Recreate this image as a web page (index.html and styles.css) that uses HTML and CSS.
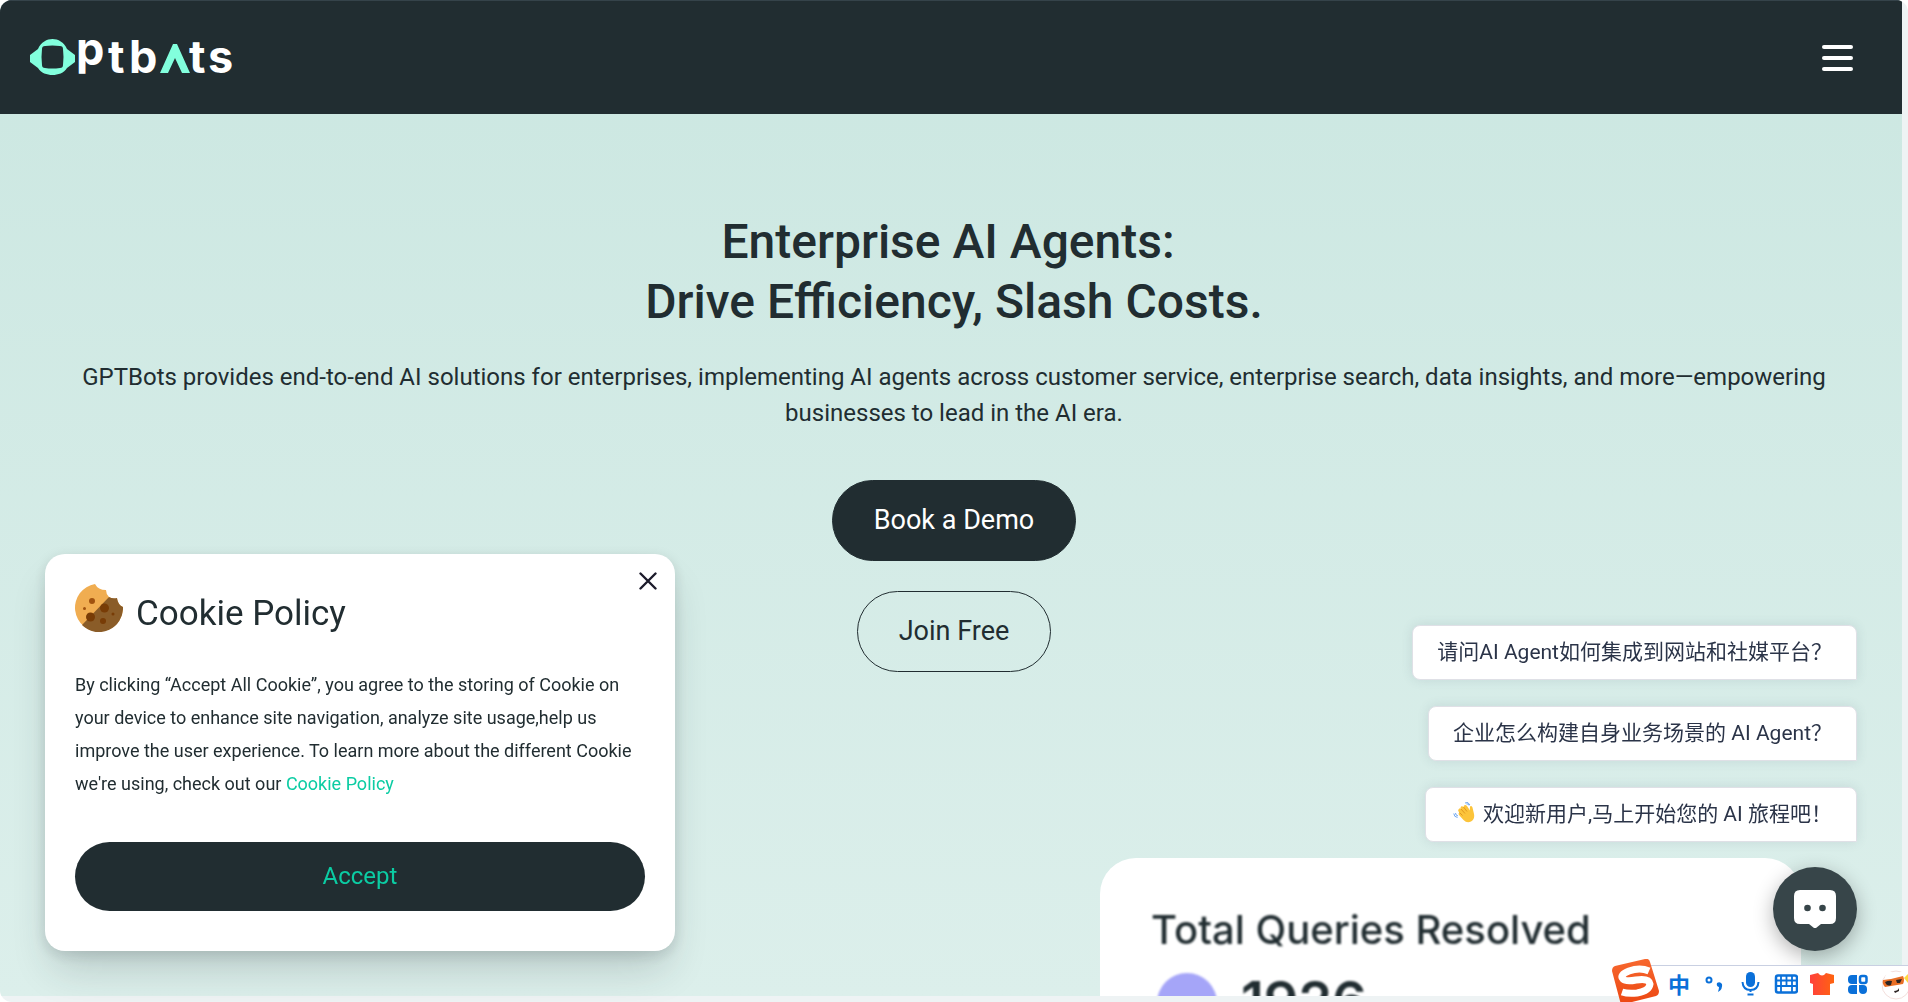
FILE: index.html
```html
<!DOCTYPE html>
<html lang="en">
<head>
<meta charset="utf-8">
<meta name="viewport" content="width=device-width, initial-scale=1">
<title>GPTBots</title>
<link rel="stylesheet" href="styles.css">
</head>
<body>
<div class="window">
  <div class="page">
    <header class="header">
      <a class="logo" href="#" aria-label="GPTBots">
        <svg class="logo-svg" viewBox="0 0 206 44" aria-hidden="true">
          <path fill="#82ffdd" fill-rule="evenodd" d="M8 13C11 6 17 3 22.500 3S34 6 37 13L45 19V26L37 32C34 37 28 39 22.500 39S11 37 8 32L0 26V19ZM15 10Q12 10 12 13Q11 21 12 29Q12 32 15 32Q22 33 30 32Q33 32 33 29Q34 21 33 13Q33 10 30 10Q22 9 15 10Z"/>
          <path fill="#82ffdd" d="M130 37L143 8H147L160 37H152L145 22L138 37Z"/>
          <text class="logo-text" x="46" y="29">p</text>
          <text class="logo-text" x="78" y="37">t</text>
          <text class="logo-text" x="99" y="37">b</text>
          <text class="logo-text" x="159" y="37">t</text>
          <text class="logo-text" x="178" y="37">s</text>
        </svg>
      </a>
      <button class="menu" type="button" aria-label="Menu">
        <span class="menu-bar"></span><span class="menu-bar"></span><span class="menu-bar"></span>
      </button>
    </header>
    <main class="hero">
      <h1 class="hero-title">Enterprise AI Agents:&nbsp;<br>Drive Efficiency, Slash Costs.</h1>
      <p class="hero-lead">GPTBots provides end-to-end AI solutions for enterprises, implementing AI agents across customer service, enterprise search, data insights, and more—empowering businesses to lead in the AI era.</p>
      <div class="hero-actions">
        <button class="btn btn-dark" type="button">Book a Demo</button>
        <button class="btn btn-outline" type="button">Join Free</button>
      </div>
      <section class="stats">
        <h2 class="stats-title">Total Queries Resolved</h2>
        <div class="stats-row"><span class="stats-dot"></span><span class="stats-number">1926</span></div>
      </section>
    </main>
  </div>
</div>

<section class="cookie" aria-labelledby="cookie-title">
  <button class="cookie-close" type="button" aria-label="Close">
    <svg viewBox="0 0 18 18" width="18" height="18"><path d="M1.500 1.500L16.500 16.500M16.500 1.500L1.500 16.500" stroke="#1c1b2b" stroke-width="2.400" stroke-linecap="round"/></svg>
  </button>
  <div class="cookie-head">
    <svg class="cookie-icon" viewBox="0 0 48 48" aria-hidden="true">
      <path fill="#f0ad51" d="M20 0A24 24 0 1 0 48 23Q43 21 42 15Q37 15 34 13Q31 10 31 6Q23 6 20 0Z"/>
      <path fill="#8a5c28" d="M34 13Q37 15 42 14Q43 21 48 23A24 24 0 0 1 7 41Z"/>
      <g fill="#a0520f"><circle cx="17" cy="17" r="3"/><circle cx="9.500" cy="24.500" r="1.500"/></g>
      <g fill="#783c06"><circle cx="29.500" cy="24" r="4.500"/><circle cx="15.500" cy="33" r="4.500"/><circle cx="28" cy="37" r="3"/><circle cx="38" cy="30" r="1.500"/></g>
    </svg>
    <h2 class="cookie-title" id="cookie-title">Cookie Policy</h2>
  </div>
  <p class="cookie-text">By clicking “Accept All Cookie”, you agree to the storing of Cookie on your device to enhance site navigation, analyze site usage,help us improve the user experience. To learn more about the different Cookie we're using, check out our <a class="cookie-link" href="#">Cookie Policy</a></p>
  <button class="cookie-accept" type="button">Accept</button>
</section>

<aside class="chat">
  <div class="bubbles">
    <button class="bubble" type="button">请问AI Agent如何集成到网站和社媒平台？</button>
    <button class="bubble" type="button">企业怎么构建自身业务场景的 AI Agent？</button>
    <button class="bubble" type="button">
      <svg class="wave" viewBox="0 0 22 22" aria-hidden="true">
        <path fill="#fcc43a" d="M5.500 8.500Q7 6.500 8.500 8L7.500 6.500Q8.500 4.500 10.500 6L11 4.500Q12.500 3.500 14 5L17 9.500Q16.500 6 17.500 5Q19 4.500 19.500 6.500L21 13Q22 18 18 20.500Q14 22.500 10.500 19L6 14Q5 12 6.500 11.500Q4.500 10 5.500 8.500Z"/>
        <path fill="none" stroke="#d98d1b" stroke-width=".8" d="M6.500 11.500L9.500 14.500M8 8L12 12.500M10.500 6L14 10.500"/>
        <path fill="none" stroke="#5c9bee" stroke-width=".9" d="M12 2Q15 0 17 4M13.500 3Q15 2 16 4.500M.8 12.500Q1 16 4.500 16.500M2.500 12Q2.500 14.500 5 15"/>
      </svg>
      欢迎新用户,马上开始您的 AI 旅程吧！</button>
  </div>
  <button class="chat-launch" type="button" aria-label="Chat">
    <svg viewBox="0 0 42 38" width="42" height="38"><path fill="#fff" d="M6 0H36Q42 0 42 6V28Q42 34 36 34H27L22 38Q21 38.500 20 38L15 34H6Q0 34 0 28V6Q0 0 6 0Z"/><circle cx="13.500" cy="18" r="3.300" fill="#374549"/><circle cx="28.500" cy="18" r="3.300" fill="#374549"/></svg>
  </button>
</aside>

<div class="ime">
  <svg class="ime-logo" viewBox="0 0 48 43" aria-hidden="true">
    <defs><linearGradient id="s-fill" x1="0" y1="0" x2="0" y2="1"><stop offset="0" stop-color="#f7682f"/><stop offset="1" stop-color="#ec4712"/></linearGradient></defs>
    <path fill="url(#s-fill)" d="M3 7L33 0Q37 -1 38 3L47 32Q47 36 44 37L12 45Q9 46 8 42L0 12Q0 8 3 7Z"/>
    <path fill="none" stroke="#fff" stroke-width="7" d="M37 12Q28 8 17 12Q7 16 11 20Q14 23 24 21Q37 19 38 25Q37 32 25 34Q16 35 10 33"/>
  </svg>
  <span class="ime-lang">中</span>
  <svg class="ime-icon" viewBox="0 0 24 24"><circle cx="7" cy="8" r="2.500" fill="none" stroke="#0a70d9" stroke-width="2"/><path fill="#0a70d9" d="M15 11Q18 9 20 12Q21 17 16 20Q17 17 17 15Q14 14 15 11Z"/></svg>
  <svg class="ime-icon" viewBox="0 0 24 24"><rect x="8" y="0" width="9" height="15" rx="4.500" fill="#0a70d9"/><path fill="none" stroke="#0a70d9" stroke-width="2" d="M4.500 10Q5 18 12.500 18T20.500 10M12.500 18V20M9.500 22.500H15.500"/></svg>
  <svg class="ime-icon" viewBox="0 0 24 24"><rect x="2" y="3.500" width="21" height="17" rx="2" fill="#fff" stroke="#0a70d9" stroke-width="2.500"/><path stroke="#0a70d9" stroke-width="1.800" d="M3 8.500H22M3 14H22M7 4V14M12.500 4V14M18 4V14M7 14V20M18 14V20"/></svg>
  <svg class="ime-icon" viewBox="0 0 24 24"><defs><linearGradient id="shirt" x1="0" y1="0" x2="1" y2="0"><stop offset="0" stop-color="#ff403c"/><stop offset="1" stop-color="#ff6410"/></linearGradient></defs><path fill="url(#shirt)" d="M0 3L8 1Q12 6 16 1L24 3V11L20 12V23H3V12L0 11Z"/></svg>
  <svg class="ime-icon" viewBox="0 0 24 24" fill="#0a70d9"><path d="M6 3H11V12H6Q2 12 2 8V7Q2 3 6 3ZM2 17Q2 13 6 13H11V22H6Q2 22 2 18ZM13 13H17Q21 13 21 17V18Q21 22 17 22T13 18Z"/><rect x="14" y="4" width="6.500" height="7" rx="2" fill="none" stroke="#0a70d9" stroke-width="2.500"/></svg>
  <svg class="ime-face" viewBox="0 0 26 32" aria-hidden="true"><circle cx="14" cy="17" r="14" fill="#fff" stroke="#f3dfdc"/><path fill="#fff" d="M3 9L6 2L11 5H17L22 2L25 9Z"/><path fill="#e96f26" d="M1 12Q11 11 21 8Q23 12 21 16L3 19Q0 16 1 12Z"/><path fill="#2c2524" d="M3 14Q7 12 10 13L9 17Q5 19 3 14ZM14 12L20 11L18 15H15ZM12 23Q16 23 17 20V23L13 25Z"/><path fill="#ffd83d" d="M22 10L26 6V15Z"/></svg>
</div>
</body>
</html>
```

FILE: styles.css
```css
* { box-sizing: border-box; }

body {
  margin: 0;
  background: #fff;
  color: #212d31;
  font-family: Roboto, "Noto Sans CJK SC", sans-serif;
}

button { font-family: inherit; cursor: pointer; }

.window {
  height: 100vh;
  padding: 0 6px 6px 0;
  overflow: hidden;
  background: #eef3f4;
  border-radius: 12px;
}

.page {
  height: 100%;
  overflow: hidden;
  background: linear-gradient(#cbe7e1, #dcefeb);
}

.header {
  display: flex;
  align-items: center;
  justify-content: space-between;
  height: 114px;
  padding: 0 49px 0 30px;
  background: #212d31;
  border-top: 1px solid #35434a;
}

.logo { display: block; }
.logo-svg { display: block; width: 206px; height: 44px; overflow: visible; }
.logo-text { font: 700 45px Inter, sans-serif; fill: #fff; }

.menu {
  display: flex;
  flex-direction: column;
  gap: 7px;
  padding: 0;
  background: none;
  border: 0;
}
.menu-bar { width: 31px; height: 4px; border-radius: 2px; background: #fff; }

.hero {
  display: flex;
  flex-direction: column;
  align-items: center;
  padding: 98px 72px 0 78px;
  text-align: center;
}
.hero-title { margin: 0; font-size: 48px; font-weight: 500; line-height: 60px; }
.hero-lead { margin: 27px 0 0; font-size: 24px; line-height: 36px; }
.hero-actions {
  display: flex;
  flex-direction: column;
  align-items: center;
  gap: 30px;
  margin-top: 49px;
}
.btn {
  height: 81px;
  padding: 0 41px 2px;
  border: 1px solid #212d31;
  border-radius: 41px;
  font-size: 27px;
}
.btn-dark { background: #212d31; color: #fff; }
.btn-outline { background: none; color: #212d31; }

.stats {
  align-self: flex-end;
  width: 701px;
  height: 400px;
  margin: 186px 29px 0 0;
  padding: 48px 51px;
  background: #fff;
  border-radius: 36px;
  text-align: left;
  font-family: Inter, sans-serif;
}
.stats-title { margin: 0; font-size: 40px; font-weight: 500; line-height: 48px; filter: blur(1px); }
.stats-row { display: flex; gap: 24px; margin-top: 19px; padding-left: 6px; filter: blur(1px); }
.stats-dot { width: 60px; height: 60px; border-radius: 50%; background: #a5a5f8; }
.stats-number { font-size: 54px; font-weight: 600; line-height: 56px; }

.cookie {
  position: fixed;
  left: 45px;
  bottom: 51px;
  width: 630px;
  padding: 30px 30px 40px;
  background: #fff;
  border-radius: 20px;
  box-shadow: 0 24px 40px -8px rgba(33, 45, 49, .2), 0 4px 14px rgba(33, 45, 49, .14);
}
.cookie-close {
  position: absolute;
  top: 18px;
  right: 18px;
  padding: 0;
  background: none;
  border: 0;
  line-height: 0;
}
.cookie-head { display: flex; gap: 13px; }
.cookie-icon { width: 48px; height: 48px; }
.cookie-title { margin: 9px 0 0; font-size: 35px; font-weight: 400; line-height: 42px; }
.cookie-text { margin: 33px 0 42px; font-size: 18px; line-height: 33px; }
.cookie-link { color: #0bcca3; text-decoration: none; }
.cookie-accept {
  display: block;
  width: 100%;
  height: 69px;
  padding: 0 0 2px;
  border: 0;
  border-radius: 35px;
  background: #212d31;
  color: #0bcca3;
  font-size: 24px;
}

.chat {
  position: fixed;
  right: 51px;
  bottom: 51px;
  display: flex;
  flex-direction: column;
  align-items: flex-end;
  gap: 25px;
}
.bubbles {
  display: flex;
  flex-direction: column;
  align-items: flex-end;
  gap: 26px;
}
.bubble {
  display: flex;
  align-items: center;
  gap: 6px;
  height: 55px;
  padding: 0 24px 6px;
  border: 1px solid #dfe0e6;
  border-radius: 8px 8px 0 8px;
  background: #fff;
  box-shadow: 0 0 12px rgba(60, 70, 100, .12);
  color: #2b3448;
  font-size: 21px;
}
.wave { width: 22px; height: 22px; margin: 0 2px 0 3px; }
.chat-launch {
  display: flex;
  align-items: center;
  justify-content: center;
  width: 84px;
  height: 84px;
  padding: 0;
  border: 0;
  border-radius: 50%;
  background: #374549;
  box-shadow: 0 6px 20px rgba(0, 0, 0, .3);
}

.ime {
  position: fixed;
  right: 0;
  bottom: 0;
  display: flex;
  align-items: center;
  gap: 12px;
  height: 37px;
  background: #fff;
  border-top: 1px solid #c9d0e2;
}
.ime-logo { width: 48px; height: 43px; margin: -7px -4px 0 -18px; }
.ime-lang { width: 22px; padding-bottom: 2px; color: #0a70d9; font: 700 22px/24px "Noto Sans CJK SC", sans-serif; }
.ime-icon { width: 24px; height: 24px; }
.ime-face { width: 26px; height: 32px; }
```
